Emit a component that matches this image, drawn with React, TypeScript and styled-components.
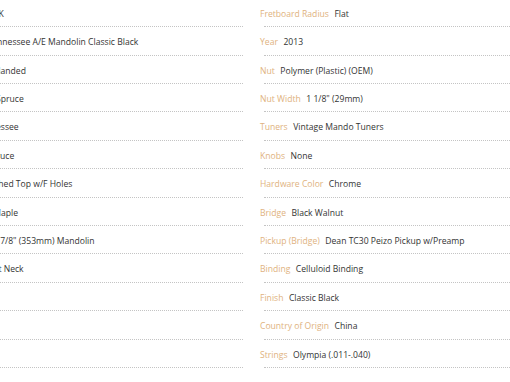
import styled, { createGlobalStyle } from 'styled-components'

const GlobalStyle = createGlobalStyle`
  html, body {
    margin: 0;
    padding: 0;
    background: #fff;
    overflow: hidden;
  }
  body {
    font-family: "Open Sans", "Noto Sans", sans-serif;
  }
`

type Spec = { label: string; value: string }

const left: Spec[] = [
  { label: 'Stock No.', value: 'TNAECBK' },
  { label: 'Product Model', value: 'Tennessee A/E Mandolin Classic Black' },
  { label: 'Hand Type', value: 'Right Handed' },
  { label: 'Top Timber', value: 'Solid Spruce' },
  { label: 'Body Shape', value: 'Tennessee' },
  { label: 'Brace Material', value: 'Spruce' },
  { label: 'Body Carvings', value: 'Arched Top w/F Holes' },
  { label: 'Back/Side Wood', value: 'Maple' },
  { label: 'Neck Scale Len', value: '13 7/8" (353mm) Mandolin' },
  { label: 'Neck Joint Kind', value: 'Set Neck' },
  { label: 'Neck', value: 'Maple' },
  { label: 'Frets', value: '20' },
  { label: 'Inlays', value: 'Dot' },
]

const right: Spec[] = [
  { label: 'Fretboard Radius', value: 'Flat' },
  { label: 'Year', value: '2013' },
  { label: 'Nut', value: 'Polymer (Plastic) (OEM)' },
  { label: 'Nut Width', value: '1 1/8" (29mm)' },
  { label: 'Tuners', value: 'Vintage Mando Tuners' },
  { label: 'Knobs', value: 'None' },
  { label: 'Hardware Color', value: 'Chrome' },
  { label: 'Bridge', value: 'Black Walnut' },
  { label: 'Pickup (Bridge)', value: 'Dean TC30 Peizo Pickup w/Preamp' },
  { label: 'Binding', value: 'Celluloid Binding' },
  { label: 'Finish', value: 'Classic Black' },
  { label: 'Country of Origin', value: 'China' },
  { label: 'Strings', value: 'Olympia (.011-.040)' },
]

export default function App() {
  return (
    <>
      <GlobalStyle />
      <Specs>
        {[left, right].map((col, i) => (
          <Column key={i}>
            {col.map((s) => (
              <Row key={s.label}>
                <Label>{s.label}</Label>
                <Value>{s.value}</Value>
              </Row>
            ))}
          </Column>
        ))}
      </Specs>
    </>
  )
}

const Specs = styled.section`
  display: grid;
  grid-template-columns: 320px 320px;
  column-gap: 17px;
  margin: -1.7px 0 0 -77px;
  width: max-content;
`

const Column = styled.ul`
  list-style: none;
  margin: 0;
  padding: 0;
`

const Row = styled.li`
  position: relative;
  display: flex;
  align-items: baseline;
  gap: 5.5px;
  height: 28.42px;
  box-sizing: border-box;
  padding-top: 8.4px;
  font-size: 8.6px;
  line-height: 14px;
  white-space: nowrap;
  &::after {
    content: '';
    position: absolute;
    left: 4px;
    right: 0;
    bottom: -0.5px;
    border-top: 1px dotted #c4c4c4;
  }
`

const Label = styled.span`
  color: #e0b27e;
`

const Value = styled.span`
  color: #333;
`
